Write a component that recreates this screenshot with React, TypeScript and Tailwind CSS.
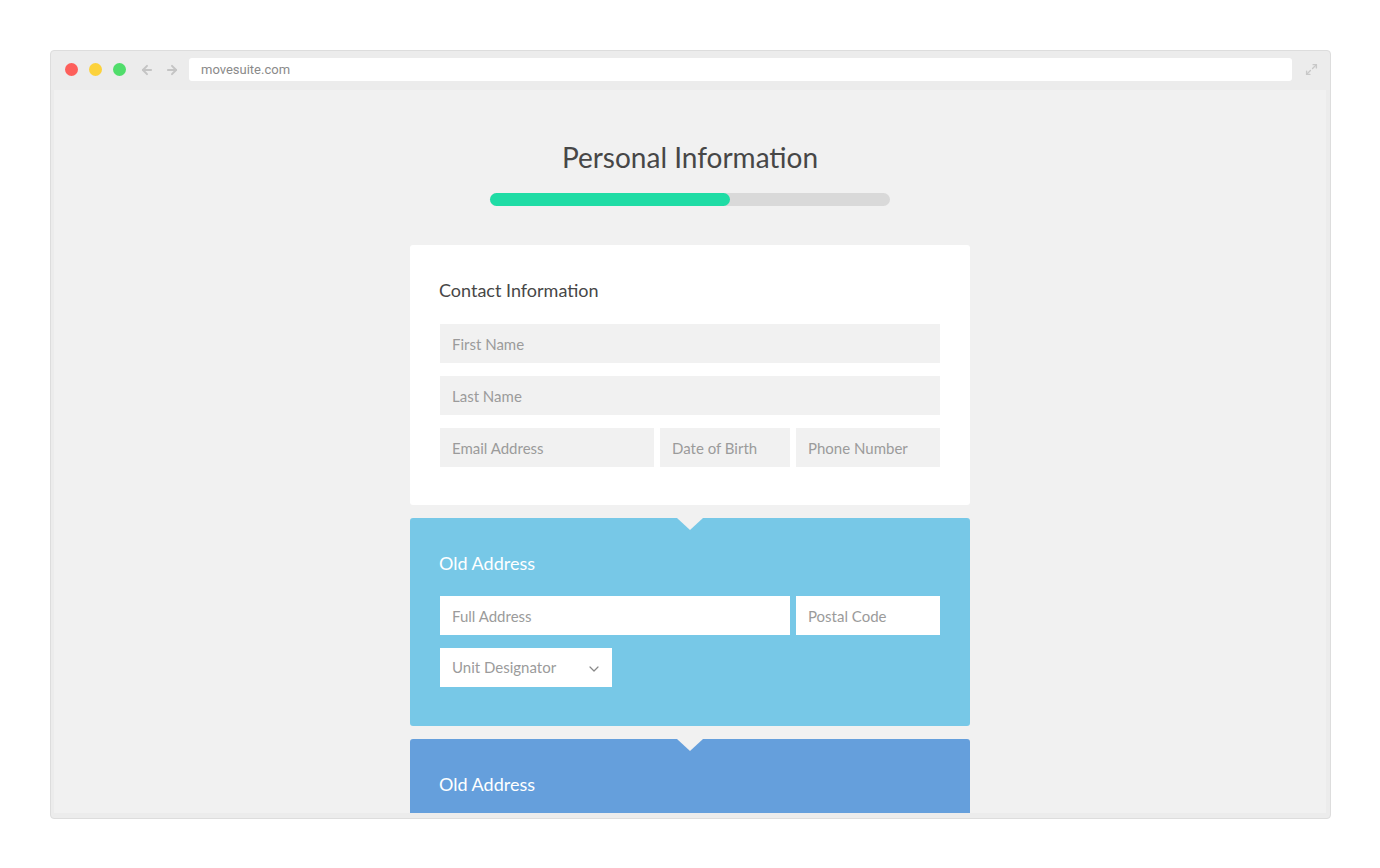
import { ArrowLeft, ArrowRight, ChevronDown, Maximize2 } from 'lucide-react'

function Field({ placeholder, className }: { placeholder: string; className: string }) {
  return (
    <input
      placeholder={placeholder}
      className={`h-[39px] px-3 text-[15px] outline-none placeholder:text-[#9b9b9b] ${className}`}
    />
  )
}

function Notch() {
  return (
    <span className="absolute top-0 left-1/2 -translate-x-1/2 w-0 h-0 border-x-[13px] border-x-transparent border-t-[12px] border-t-[#f1f1f1]" />
  )
}

export default function App() {
  return (
    <div className="min-h-screen bg-white pt-[50px] pl-[50px] font-['Lato','Open_Sans',sans-serif]">
      <div className="w-[1281px] h-[769px] border border-[#dddddd] rounded-[4px] bg-[#ececec] flex flex-col">
        {/* browser toolbar */}
        <div className="h-[39px] shrink-0 flex items-center pl-[14px] pr-[12px] pb-[2px]">
          <span className="w-[13px] h-[13px] rounded-full bg-[#fd5f5b]" />
          <span className="w-[13px] h-[13px] rounded-full bg-[#fcd23b] ml-[11px]" />
          <span className="w-[13px] h-[13px] rounded-full bg-[#50dd6b] ml-[11px]" />
          <ArrowLeft className="ml-[14px] text-[#c4c4c4]" size={14} strokeWidth={3.4} />
          <ArrowRight className="ml-[11px] text-[#c4c4c4]" size={14} strokeWidth={3.4} />
          <div className="ml-[10px] flex-1 h-[23px] bg-white rounded-[3px] flex items-center pl-[12px] text-[13px] text-[#8a8a8a] font-['Roboto',sans-serif]">
            movesuite.com
          </div>
          <Maximize2 className="ml-[13px] text-[#c8c8c8]" size={13} strokeWidth={2.6} />
        </div>

        {/* page */}
        <div className="ml-[3px] mr-[4px] mb-[5px] flex-1 bg-[#f1f1f1] overflow-hidden flex flex-col items-center">
          <h1 className="shrink-0 pt-[50px] text-[28px] leading-[34px] text-[#474747]">Personal Information</h1>
          <div className="shrink-0 mt-[19px] w-[400px] h-[13px] rounded-full bg-[#d9d9d9]">
            <div className="w-[240px] h-full rounded-full bg-[#1fdca5]" />
          </div>

          <div className="shrink-0 mt-[39px] w-[560px] bg-white rounded-[3px] px-[30px] pt-[34px] pb-[38px]">
            <h2 className="-ml-px text-[18px] leading-[22px] text-[#474747]">Contact Information</h2>
            <div className="mt-[23px] flex flex-col gap-[13px]">
              <Field placeholder="First Name" className="w-full bg-[#f1f1f1]" />
              <Field placeholder="Last Name" className="w-full bg-[#f1f1f1]" />
              <div className="flex gap-[6px]">
                <Field placeholder="Email Address" className="w-[214px] bg-[#f1f1f1]" />
                <Field placeholder="Date of Birth" className="w-[130px] bg-[#f1f1f1]" />
                <Field placeholder="Phone Number" className="w-[144px] bg-[#f1f1f1]" />
              </div>
            </div>
          </div>

          <div className="shrink-0 relative mt-[13px] w-[560px] bg-[#77c8e7] rounded-[3px] px-[30px] pt-[34px] pb-[39px]">
            <Notch />
            <h2 className="-ml-px text-[18px] leading-[22px] text-white">Old Address</h2>
            <div className="mt-[22px] flex flex-col gap-[13px]">
              <div className="flex gap-[6px]">
                <Field placeholder="Full Address" className="w-[350px] bg-white" />
                <Field placeholder="Postal Code" className="w-[144px] bg-white" />
              </div>
              <div className="w-[172px] h-[39px] bg-white flex items-center justify-between pl-3 pr-[10px] text-[15px] text-[#9b9b9b]">
                Unit Designator
                <ChevronDown size={16} strokeWidth={1.8} className="text-[#888888] mt-[2px]" />
              </div>
            </div>
          </div>

          <div className="shrink-0 relative mt-[13px] w-[560px] bg-[#659fdc] rounded-[3px] px-[30px] pt-[34px] pb-[60px]">
            <Notch />
            <h2 className="-ml-px text-[18px] leading-[22px] text-white">Old Address</h2>
          </div>
        </div>
      </div>
    </div>
  )
}
